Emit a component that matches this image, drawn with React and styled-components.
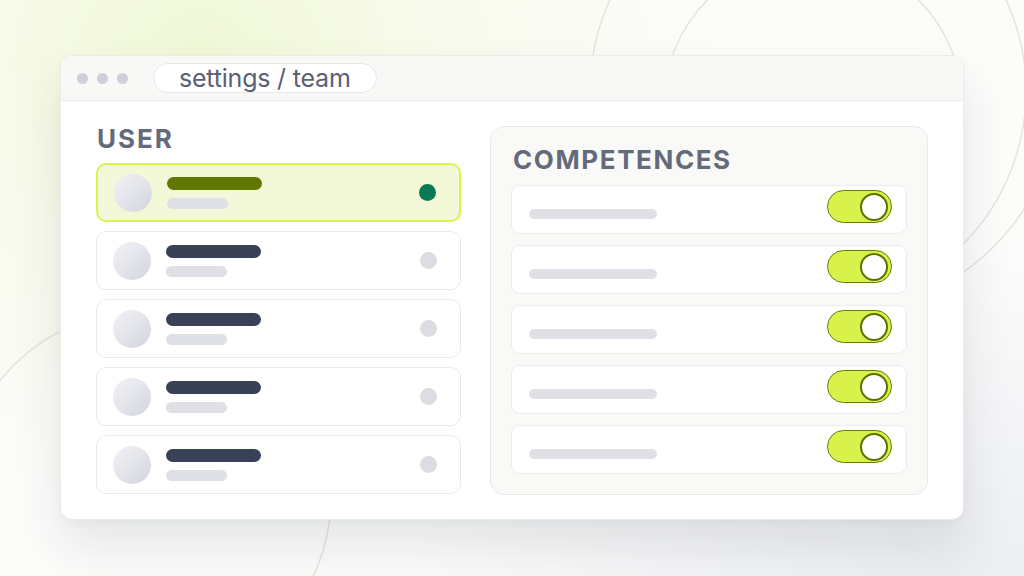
import React from 'react';
import styled, { createGlobalStyle } from 'styled-components';

const GlobalStyle = createGlobalStyle`
  html, body {
    margin: 0;
    padding: 0;
  }
  body {
    font-family: 'Inter', 'Noto Sans', sans-serif;
    -webkit-font-smoothing: antialiased;
  }
  * {
    box-sizing: border-box;
  }
`;

const Page = styled.div`
  position: relative;
  width: 1024px;
  height: 576px;
  overflow: hidden;
  padding: 55px 0 0 60px;
  background:
    radial-gradient(ellipse 520px 460px at 200px 60px, rgba(240, 248, 212, 0.95) 0%, rgba(245, 250, 228, 0.65) 45%, rgba(255, 255, 255, 0) 100%),
    radial-gradient(ellipse 560px 360px at 960px 600px, rgba(233, 235, 240, 0.9) 0%, rgba(255, 255, 255, 0) 100%),
    #fcfcfb;
`;

const Decor = styled.svg`
  position: absolute;
  inset: 0;
  width: 100%;
  height: 100%;
  pointer-events: none;
`;

const Window = styled.div`
  position: relative;
  z-index: 1;
  width: 904px;
  height: 465px;
  background: #ffffff;
  border: 1px solid #ebebe7;
  border-radius: 12px;
  overflow: hidden;
  display: flex;
  flex-direction: column;
  box-shadow: 0 28px 50px rgba(30, 35, 50, 0.1), 0 3px 8px rgba(0, 0, 0, 0.03);
`;

const TitleBar = styled.div`
  height: 45px;
  flex-shrink: 0;
  display: flex;
  align-items: center;
  padding-left: 16px;
  background: #f8f8f6;
  border-bottom: 1px solid #e9e9e5;
`;

const Dots = styled.div`
  display: flex;
  gap: 9px;
  margin-top: 1px;
`;

const Dot = styled.span`
  width: 11px;
  height: 11px;
  border-radius: 50%;
  background: #cdd0d9;
`;

const UrlPill = styled.div`
  margin-left: 25px;
  height: 30px;
  padding: 0 25px;
  display: flex;
  align-items: center;
  background: #ffffff;
  border: 1.5px solid #e7e7e3;
  border-radius: 15px;
  font-size: 25px;
  font-weight: 400;
  color: #5a6174;
  letter-spacing: -0.2px;
`;

const Body = styled.div`
  display: flex;
  align-items: flex-start;
  gap: 29px;
  padding: 25px 35px 0 35px;
`;

const UserColumn = styled.div`
  width: 365px;
  display: flex;
  flex-direction: column;
`;

const Heading = styled.h2`
  margin: ${p => (p.$panel ? '0 0 12px 2px' : '0 0 11px 1px')};
  font-size: 26px;
  line-height: 26px;
  font-weight: 700;
  letter-spacing: ${p => (p.$panel ? '1.6px' : '2px')};
  color: #636a7c;
`;

const UserList = styled.div`
  display: flex;
  flex-direction: column;
  gap: 9px;
`;

const UserRow = styled.div`
  height: 59px;
  display: flex;
  align-items: center;
  padding: 0 23px 0 16px;
  border-radius: 10px;
  border: ${p => (p.$active ? '2px solid #dcf24f' : '1.5px solid #ebebe6')};
  background: ${p => (p.$active ? '#f3f8d9' : '#ffffff')};
`;

const Avatar = styled.div`
  width: 38px;
  height: 38px;
  border-radius: 50%;
  flex-shrink: 0;
  background: linear-gradient(135deg, #f1f2f6 0%, #e3e5eb 50%, #d1d4de 100%);
`;

const Lines = styled.div`
  margin-left: 15px;
  display: flex;
  flex-direction: column;
  gap: 8px;
`;

const NameBar = styled.div`
  width: 95px;
  height: 13px;
  border-radius: 7px;
  background: ${p => (p.$active ? '#617800' : '#394157')};
`;

const SubBar = styled.div`
  width: 61px;
  height: 11px;
  border-radius: 6px;
  background: #dfe0e6;
`;

const Status = styled.div`
  margin-left: auto;
  width: 17px;
  height: 17px;
  border-radius: 50%;
  background: ${p => (p.$active ? '#0a7a55' : '#dcdde3')};
`;

const Panel = styled.div`
  width: 438px;
  padding: 20px;
  background: #f9f9f7;
  border: 1px solid #e9e9e5;
  border-radius: 14px;
  display: flex;
  flex-direction: column;
`;

const CompList = styled.div`
  display: flex;
  flex-direction: column;
  gap: 11px;
`;

const CompRow = styled.div`
  height: 49px;
  display: flex;
  align-items: center;
  justify-content: space-between;
  padding: 0 14px 0 17px;
  background: #ffffff;
  border: 1.5px solid #ebebe7;
  border-radius: 9px;
`;

const CompBar = styled.div`
  width: 128px;
  height: 10px;
  margin-top: 9px;
  border-radius: 5px;
  background: #dfe0e6;
`;

const Toggle = styled.div`
  width: 65px;
  height: 33px;
  margin-bottom: 6px;
  padding: 0 3px;
  display: flex;
  align-items: center;
  justify-content: flex-end;
  border-radius: 17px;
  background: #d9f24b;
  border: 1.5px solid #647d00;
`;

const Knob = styled.div`
  width: 28px;
  height: 28px;
  border-radius: 50%;
  background: #ffffff;
  border: 2px solid #5a7200;
`;

const users = [true, false, false, false, false];
const competences = [1, 2, 3, 4, 5];

export default function App() {
  return (
    <>
      <GlobalStyle />
      <Page>
        <Decor viewBox="0 0 1024 576">
          <g fill="none" stroke="#e4e4de" strokeWidth="1.5">
            <circle cx="808" cy="91" r="218" />
            <circle cx="813" cy="105" r="149" />
            <path d="M 1032 196 A 236 236 0 0 1 958 276" />
            <circle cx="145" cy="497" r="186" />
          </g>
        </Decor>
        <Window>
          <TitleBar>
            <Dots>
              <Dot />
              <Dot />
              <Dot />
            </Dots>
            <UrlPill>settings / team</UrlPill>
          </TitleBar>
          <Body>
            <UserColumn>
              <Heading>USER</Heading>
              <UserList>
                {users.map((active, i) => (
                  <UserRow key={i} $active={active}>
                    <Avatar />
                    <Lines>
                      <NameBar $active={active} />
                      <SubBar />
                    </Lines>
                    <Status $active={active} />
                  </UserRow>
                ))}
              </UserList>
            </UserColumn>
            <Panel>
              <Heading $panel>COMPETENCES</Heading>
              <CompList>
                {competences.map(id => (
                  <CompRow key={id}>
                    <CompBar />
                    <Toggle>
                      <Knob />
                    </Toggle>
                  </CompRow>
                ))}
              </CompList>
            </Panel>
          </Body>
        </Window>
      </Page>
    </>
  );
}
